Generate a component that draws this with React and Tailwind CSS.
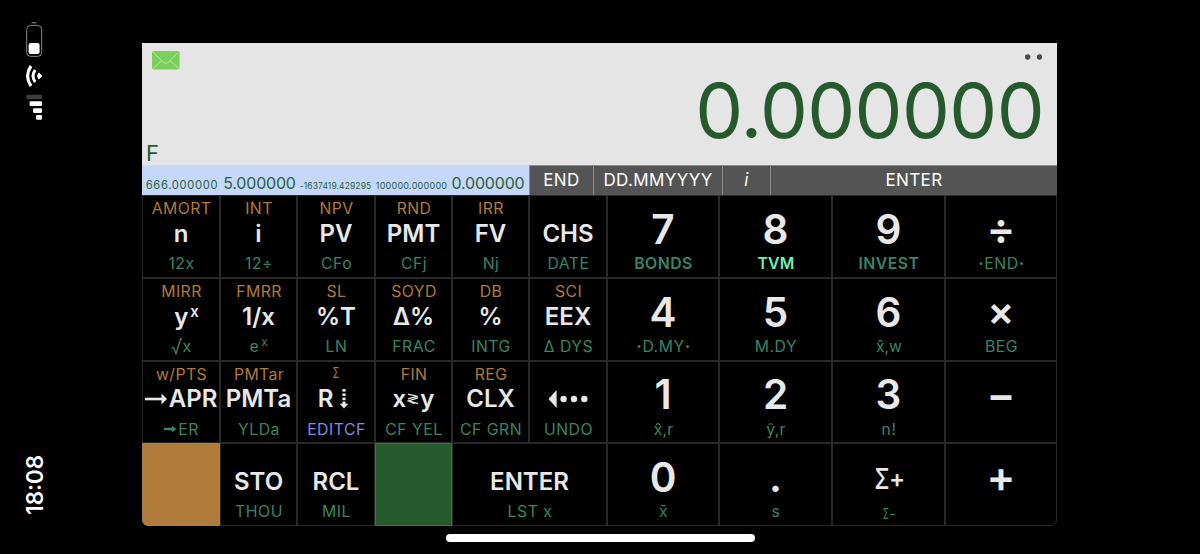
import React from "react";

const cols =
  "grid grid-cols-[78px_77px_78px_77px_77px_78px_112px_113px_113px_112px] grid-rows-[83px_83px_82px_83px]";

function Sup({ children, className }) {
  return <span className={"leading-none " + className}>{children}</span>;
}

function Key({ top, main, bottom, digit, topCls = "", mainCls = "", bottomCls = "text-[#378468]", cls = "" }) {
  return (
    <div className={"flex flex-col items-center border border-[#292929] whitespace-nowrap " + cls}>
      <div className={"flex justify-center pl-px text-[15.8px] tracking-[0.4px] text-[#b17a38] leading-[26px] " + (digit ? "h-[21px] " : "h-[25px] ") + topCls}>
        {top}
      </div>
      <div
        className={
          "flex items-center justify-center font-semibold text-[#e8e8e8] " +
          (digit ? "h-[25px] text-[40.5px] leading-[25px] " : "h-[25px] text-[24px] leading-[25px] ") +
          mainCls
        }
      >
        {main}
      </div>
      <div className={"flex justify-center pl-px text-[15.8px] h-[20px] leading-[21px] tracking-[0.5px] " + (digit ? "mt-[11px] " : "mt-[7px] ") + bottomCls}>
        {bottom}
      </div>
    </div>
  );
}

const LongArrow = () => (
  <svg width="23" height="14" viewBox="0 0 23 14" className="mr-px">
    <path d="M0 7H18" stroke="#e8e8e8" strokeWidth="2.6" />
    <path d="M16.5 1.5 22 7 16.5 12.5Z" fill="#e8e8e8" />
  </svg>
);

const SmallArrow = () => (
  <svg width="13" height="8" viewBox="0 0 13 8" className="mt-[6px] mr-px">
    <path d="M0 3 8 2.6V.8L12.5 4 8 7.2V5.4L0 5Z" fill="#378468" />
  </svg>
);

const DottedDown = () => (
  <svg width="10" height="20" viewBox="0 0 10 20" className="ml-[6px]">
    <g fill="#e8e8e8">
      <rect x="3.4" y="0" width="3.2" height="2.6" />
      <rect x="3.4" y="4.4" width="3.2" height="2.6" />
      <rect x="3.4" y="8.6" width="3.2" height="2.6" />
      <rect x="3.4" y="12.6" width="3.2" height="3" />
      <path d="M.6 14.8H9.4L5 19.6Z" />
    </g>
  </svg>
);

const Swap = () => (
  <svg width="12" height="13" viewBox="0 0 13 14" className="mx-px mt-[1px]" fill="none" stroke="#e8e8e8" strokeWidth="1.4">
    <path d="M1 1.2 11.5 3.6 1 6.4M12 5.2 1.5 8.6 12 11.6M1 8.2 8 11.4" />
  </svg>
);

const BackDots = () => (
  <svg width="40" height="20" viewBox="0 0 40 20" fill="#e8e8e8" className="-mt-[2px]">
    <path d="M.5 10 8.6 1V19Z" />
    <circle cx="15.6" cy="10" r="3.2" />
    <circle cx="26" cy="10" r="3.2" />
    <circle cx="36.3" cy="10" r="3.2" />
  </svg>
);

const Root = () => (
  <svg width="11" height="17" viewBox="0 0 11 17" className="mt-[2px]" fill="none" stroke="#378468" strokeWidth="1.3">
    <path d="M.6 10.5 2.6 9.4 5 15.8 9.5 1H11" />
  </svg>
);

const Dot = () => <span className="font-extrabold">·</span>;

const keys = [
  { top: "AMORT", main: "n", bottom: "12x" },
  { top: "INT", main: "i", bottom: "12÷" },
  { top: "NPV", main: "PV", bottom: "CFo" },
  { top: "RND", main: "PMT", bottom: "CFj" },
  { top: "IRR", main: "FV", bottom: "Nj" },
  { main: "CHS", bottom: "DATE" },
  { digit: true, main: "7", bottom: "BONDS", bottomCls: "text-[#378468] font-semibold" },
  { digit: true, main: "8", bottom: "TVM", bottomCls: "text-[#70edb9] font-semibold !tracking-[0.2px]" },
  { digit: true, main: "9", bottom: "INVEST", bottomCls: "text-[#378468] font-semibold" },
  { digit: true, main: "÷", bottom: <><Dot />END<Dot /></>, mainCls: "pb-[3px] !text-[43px]" },

  { top: "MIRR", main: <>y<Sup className="ml-[2px] mb-[10px] text-[15px]">x</Sup></>, bottom: <><Root />x</>, mainCls: "pl-[11px]" },
  { top: "FMRR", main: "1/x", bottom: <>e<Sup className="ml-[2px] text-[12px]">x</Sup></>, bottomCls: "text-[#378468] pl-[9px]" },
  { top: "SL", main: "%T", bottom: "LN" },
  { top: "SOYD", main: "Δ%", bottom: "FRAC" },
  { top: "DB", main: "%", bottom: "INTG" },
  { top: "SCI", main: "EEX", bottom: "Δ DYS" },
  { digit: true, main: "4", bottom: <><Dot />D.MY<Dot /></> },
  { digit: true, main: "5", bottom: "M.DY" },
  { digit: true, main: "6", bottom: "x̂,w", bottomCls: "text-[#378468] !tracking-[0px]" },
  { digit: true, main: "×", bottom: "BEG", mainCls: "pb-[3px]" },

  { top: "w/PTS", main: <><LongArrow />APR</>, bottom: <><SmallArrow />ER</>, mainCls: "-mt-px mb-px", bottomCls: "text-[#378468]" },
  { top: "PMTar", main: "PMTa", bottom: "YLDa", mainCls: "-mt-px mb-px" },
  { top: <span className="scale-x-65">Σ</span>, main: <>R<DottedDown /></>, bottom: "EDITCF", topCls: "!text-[14px] -mt-[2px] mb-[2px]", mainCls: "pr-[5px] -mt-px mb-px", bottomCls: "text-[#8686e6]" },
  { top: "FIN", main: <>x<Swap />y</>, bottom: "CF YEL", mainCls: "-mt-px mb-px" },
  { top: "REG", main: "CLX", bottom: "CF GRN", mainCls: "-mt-px mb-px" },
  { main: <BackDots />, bottom: "UNDO" },
  { digit: true, main: "1", bottom: "x̂,r", mainCls: "-mt-px mb-px", bottomCls: "text-[#378468] !tracking-[0.2px]" },
  { digit: true, main: "2", bottom: "ŷ,r", mainCls: "-mt-px mb-px", bottomCls: "text-[#378468] !tracking-[0.2px]" },
  { digit: true, main: "3", bottom: "n!", mainCls: "-mt-px mb-px" },
  { digit: true, main: "−", mainCls: "pb-[3px] !text-[43px]" },

  { cls: "bg-[#b17b3c] !border-[#a08050] rounded-bl-[6px]" },
  { main: "STO", bottom: "THOU" },
  { main: "RCL", bottom: "MIL" },
  { cls: "bg-[#255a2d] !border-[#4c6e50]" },
  { main: "ENTER", bottom: "LST x", cls: "col-span-2" },
  { digit: true, main: "0", bottom: "x̄" },
  { digit: true, main: ".", bottom: "s" },
  {
    main: <><span className="-mr-[3px] scale-x-75 text-[29px] font-medium">Σ</span>+</>,
    bottom: <><span className="-mr-[2px] scale-x-65">Σ</span>-</>,
    mainCls: "-mt-[3px] mb-[3px]",
    bottomCls: "text-[#378468] !text-[14px] pt-[2px]",
  },
  { digit: true, main: "+", mainCls: "pb-[3px] !text-[43px]", cls: "rounded-br-[6px]" },
];

function StatusColumn() {
  return (
    <div className="flex w-[142px] flex-col justify-between pl-[25px] pt-[20px] pb-[39px]">
      <svg width="18" height="102" viewBox="0 0 18 102">
        <path d="M6 3.2Q9 .8 12 3.2Z" fill="#8a8a8a" />
        <rect x="1.7" y="5.4" width="15" height="31" rx="4" fill="none" stroke="#8a8a8a" strokeWidth="1" />
        <rect x="3.6" y="23" width="11" height="11" rx="2" fill="#fff" />
        <path d="M16.8 56 13.8 52.9Q11.4 56 13.8 59.1Z" fill="#fff" stroke="#fff" strokeWidth="1" strokeLinejoin="round" />
        <path d="M10.2 50Q5.8 56 10.2 62" fill="none" stroke="#fff" strokeWidth="3" />
        <path d="M6 46Q-.8 56 6 66" fill="none" stroke="#fff" strokeWidth="3.2" />
        <rect x="1.4" y="74.8" width="15.6" height="4.4" rx="1" fill="#3c3c3c" />
        <rect x="4.6" y="81.2" width="12.4" height="4.8" rx="1.2" fill="#fff" />
        <rect x="8" y="88.2" width="9" height="4.8" rx="1.2" fill="#fff" />
        <rect x="11" y="95" width="6" height="4.8" rx="1.2" fill="#fff" />
      </svg>
      <div className="ml-px w-[18px] rotate-180 text-[22.3px] font-semibold leading-[18px] text-white [writing-mode:vertical-rl]">18:08</div>
    </div>
  );
}

function Display() {
  return (
    <div className="flex h-[122px] flex-col bg-[#e5e5e5]">
      <div className="flex h-[30px] items-start justify-between pl-[10px] pr-[15px] pt-[8px]">
        <svg width="28" height="19" viewBox="0 0 28 19">
          <rect x="0" y="0" width="27.6" height="18.4" rx="1.6" fill="#7bd05d" />
          <path d="M1 1 11.8 11.6Q13.8 13.4 15.8 11.6L26.6 1M1 17.4 9.8 9.6M26.6 17.4 17.8 9.6" fill="none" stroke="#b9e6a8" strokeWidth="1" />
        </svg>
        <svg width="17" height="6" viewBox="0 0 17 6" className="mt-[3px]" fill="#4a4a4a">
          <circle cx="2.7" cy="3" r="2.7" />
          <circle cx="14.5" cy="3" r="2.7" />
        </svg>
      </div>
      <div className="flex h-[75px] items-center justify-end pr-[13px] pb-[2px] text-[76px] leading-[76px] tracking-[-0.6px] text-[#255a2d]">0.000000</div>
      <div className="-mt-[5px] pl-[4px] text-[22px] leading-[20px] text-[#255a2d]">F</div>
    </div>
  );
}

function Registers() {
  return (
    <div className="grid h-[30px] w-[387px] grid-cols-[80px_75px_77px_75px_78px] items-baseline justify-items-center bg-[#c5d8fb] leading-[36px] text-[#2b6040] whitespace-nowrap">
      <span className="text-[11.2px] tracking-[0.7px]">666.000000</span>
      <span className="text-[16px] tracking-[-0.2px]">5.000000</span>
      <span className="text-[8.5px] tracking-[0.1px]">-1637419.429295</span>
      <span className="text-[9px] tracking-[0.25px]">100000.000000</span>
      <span className="text-[16px] tracking-[-0.2px]">0.000000</span>
    </div>
  );
}

export default function App() {
  return (
    <div className="flex h-[554px] w-[1200px] overflow-hidden bg-black font-['Inter',sans-serif]">
      <StatusColumn />
      <div className="flex w-[915px] flex-col pt-[43px]">
        <Display />
        <div className="flex h-[30px]">
          <Registers />
          <div className="grid flex-1 grid-cols-[65px_129px_48px_1fr] border-t border-[#8c8c8c] bg-[#545454] text-center text-[17px] leading-[29px] tracking-[0.4px] text-white">
            <span className="border-r border-l border-[#8c8c8c]">END</span>
            <span className="border-r border-[#8c8c8c]">DD.MMYYYY</span>
            <span className="border-r border-[#8c8c8c] italic">i</span>
            <span>ENTER</span>
          </div>
        </div>
        <div className={cols}>
          {keys.map((k, i) => (
            <Key key={i} {...k} />
          ))}
        </div>
        <div className="ml-[304px] mt-[8px] h-[8px] w-[309px] shrink-0 rounded-full bg-white" />
      </div>
    </div>
  );
}
